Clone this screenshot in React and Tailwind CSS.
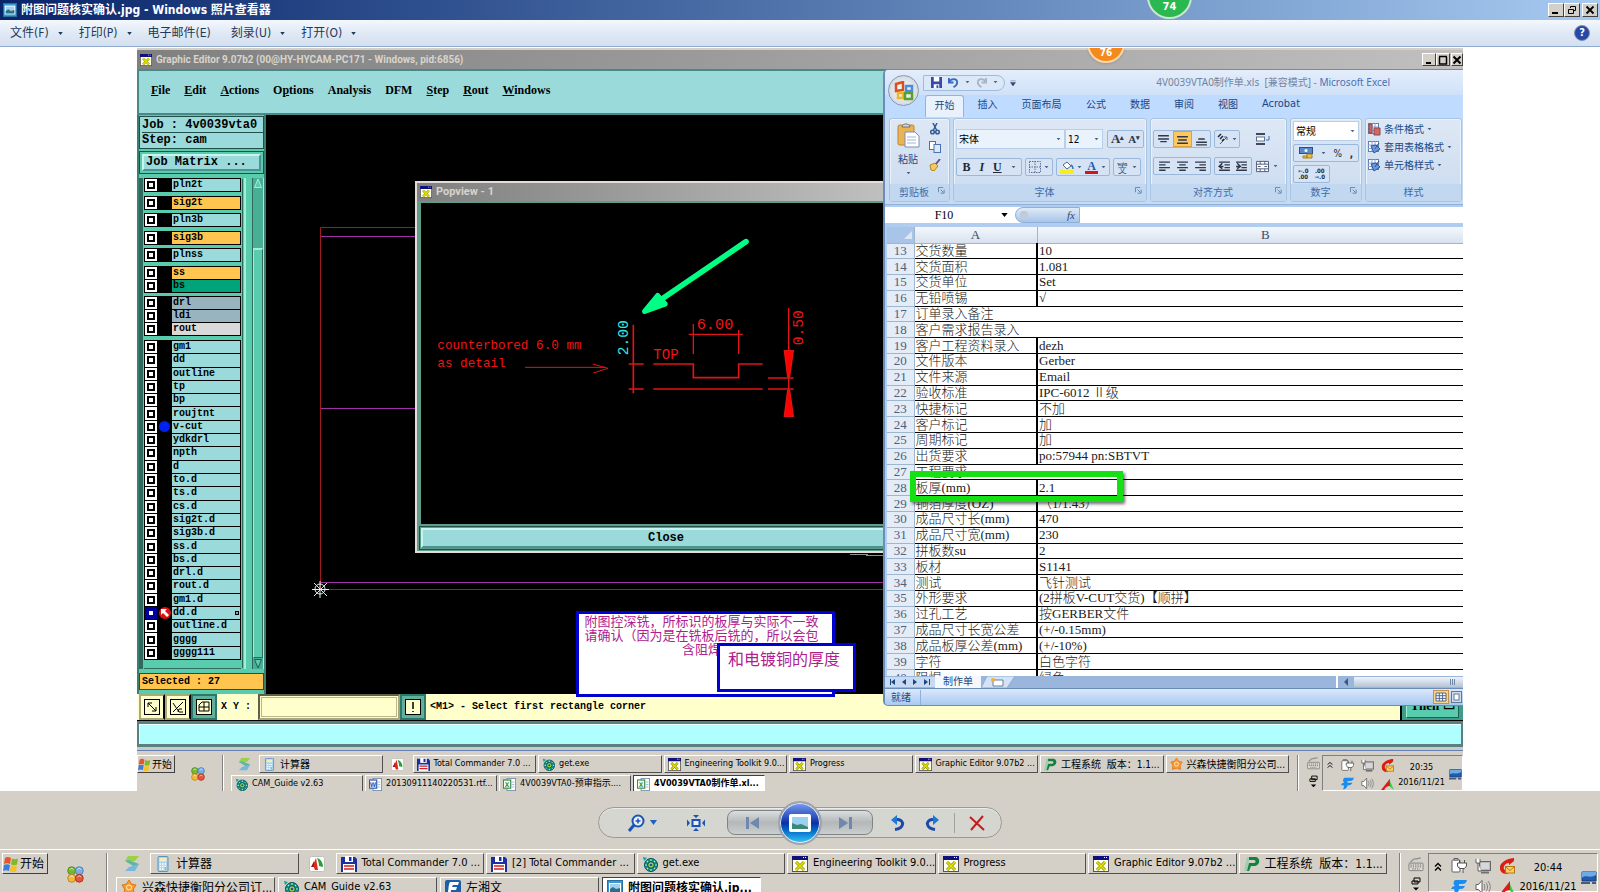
import { useState } from "react";

const layerGroups = [
  [{ name: "pln2t", color: "bg-[#9adada]" }],
  [{ name: "sig2t", color: "bg-[#ffc54f]" }],
  [{ name: "pln3b", color: "bg-[#9adada]" }],
  [{ name: "sig3b", color: "bg-[#ffc54f]" }],
  [{ name: "plnss", color: "bg-[#9adada]" }],
  [
    { name: "ss", color: "bg-[#ffc54f]" },
    { name: "bs", color: "bg-[#00a37a]" },
  ],
  [
    { name: "drl", color: "bg-[#98b4bf]" },
    { name: "ldi", color: "bg-[#98b4bf]" },
    { name: "rout", color: "bg-[#d9d9d9]" },
  ],
  [
    "gm1", "dd", "outline", "tp", "bp", "roujtnt", "v-cut", "ydkdrl", "npth", "d", "to.d", "ts.d",
    "cs.d", "sig2t.d", "sig3b.d", "ss.d", "bs.d", "drl.d", "rout.d", "gm1.d", "dd.d", "outline.d",
    "gggg", "gggg111",
  ].map((name) => ({ name, color: "bg-[#9adada]" })),
];

const sheetRows = [
  [13, "交货数量", "10"],
  [14, "交货面积", "1.081"],
  [15, "交货单位", "Set"],
  [16, "无铅喷锡", "√"],
  [17, "订单录入备注", null],
  [18, "客户需求报告录入", null],
  [19, "客户工程资料录入", "dezh"],
  [20, "文件版本", "Gerber"],
  [21, "文件来源", "Email"],
  [22, "验收标准", "IPC-6012 Ⅱ级"],
  [23, "快捷标记", "不加"],
  [24, "客户标记", "加"],
  [25, "周期标记", "加"],
  [26, "出货要求", "po:57944 pn:SBTVT"],
  [27, "工程要求", null],
  [28, "板厚(mm)", "2.1"],
  [29, "铜箔厚度(OZ)", "（1/1.43）"],
  [30, "成品尺寸长(mm)", "470"],
  [31, "成品尺寸宽(mm)", "230"],
  [32, "拼板数su", "2"],
  [33, "板材", "S1141"],
  [34, "测试", "飞针测试"],
  [35, "外形要求", "(2拼板V-CUT交货)【顺拼】"],
  [36, "过孔工艺", "按GERBER文件"],
  [37, "成品尺寸长宽公差", "(+/-0.15mm)"],
  [38, "成品板厚公差(mm)", "(+/-10%)"],
  [39, "字符", "白色字符"],
  [40, "阻焊", "绿色"],
];

/* ---------- icons ---------- */

const XWindowIcon = ({ className }) => (
  <svg viewBox="0 0 16 16" className={className}>
    <rect x="0.500" y="1.500" width="15" height="14" fill="#fffff0" stroke="#555" />
    <rect x="0" y="0" width="16" height="4" fill="#10107a" />
    <path d="M11 1.500h1M13 1.500h1" stroke="#fff" />
    <path d="M4 6l8 8M12 6l-8 8" stroke="#8a8a00" strokeWidth="3" />
    <path d="M4 6l8 8M12 6l-8 8" stroke="#e6e600" strokeWidth="1.600" />
  </svg>
);

const DiskIcon = ({ className }) => (
  <svg viewBox="0 0 16 16" className={className}>
    <path d="M0 1h14l2 2v13H0z" fill="#1b2fa0" />
    <rect x="4" y="0" width="8" height="6" fill="#fff" />
    <rect x="8" y="1" width="2.500" height="4" fill="#1b2fa0" />
    <rect x="2" y="8" width="12" height="8" fill="#fff" />
    <path d="M3 10h10M3 13h10" stroke="#d02020" strokeWidth="1.400" />
  </svg>
);

const GetIcon = ({ className }) => (
  <svg viewBox="0 0 16 16" className={className}>
    <path d="M1 1l4 1-3 3z" fill="#10a0a0" />
    <circle cx="9" cy="9" r="6.500" fill="#0c8f86" stroke="#064f55" />
    <path d="M9 3v2M9 13v2M3 9h2M13 9h2M5 5l1 1M13 5l-1 1M5 13l1-1M13 13l-1-1" stroke="#aef0c0" strokeWidth="1.200" />
    <circle cx="9" cy="9" r="3.300" fill="#8fd84a" stroke="#103f60" />
    <circle cx="9" cy="9" r="1.300" fill="#1b50a0" />
  </svg>
);

const CalcIcon = ({ className }) => (
  <svg viewBox="0 0 16 16" className={className}>
    <rect x="3" y="0.500" width="10" height="15" rx="1" fill="#a8d4f0" stroke="#5c93bb" />
    <rect x="4.500" y="2" width="7" height="3.500" fill="#f7e9c0" />
    <path d="M4.500 8h7M4.500 10.500h7M4.500 13h7" stroke="#fff" strokeWidth="1.500" strokeDasharray="1.500 1" />
    <path d="M10.500 11v3" stroke="#f0a030" strokeWidth="1.500" />
  </svg>
);

const PdfIcon = ({ className }) => (
  <svg viewBox="0 0 16 16" className={className}>
    <rect x="0.500" y="0.500" width="15" height="15" rx="2" fill="#fff" stroke="#c0c0c0" />
    <path d="M8 2c4 1 6 5 6 9l-4-1c0-3-1-6-2-8z" fill="#2c9c38" />
    <path d="M7 2l2 12H6L4 9z" fill="#e02818" />
    <path d="M5 5L2 11h3z" fill="#a81212" />
  </svg>
);

const FoldIcon = ({ className }) => (
  <svg viewBox="0 0 16 16" className={className}>
    <path d="M4 0h11l-4 5H1z" fill="#9ccf4a" />
    <path d="M1 5l4-1 10 4-4 3z" fill="#5fb6a0" />
    <path d="M5 11l10-3-4 7H1z" fill="#78b8dc" />
  </svg>
);

const FlagIcon = ({ className }) => (
  <svg viewBox="0 0 16 16" className={className}>
    <path d="M2 2c2-1.500 4-1 6 0L7 8C5 7 3 7 1 8z" fill="#e8552a" />
    <path d="M9 2.500c2 1 4 1 6 0l-1 6c-2 1-4 1-6 0z" fill="#7db928" />
    <path d="M1 9c2-1 4-1 6 0l-1 6c-2-1-4-1-6 0z" fill="#3a7edc" />
    <path d="M8 9.500c2 1 4 1 6 0l-1 6c-2 1-4 1-6 0z" fill="#f8c020" />
  </svg>
);

const OrbsIcon = ({ className }) => (
  <svg viewBox="0 0 18 18" className={className}>
    <circle cx="5" cy="5" r="4.200" fill="#78b830" stroke="#4c8a20" />
    <circle cx="13" cy="5" r="4.200" fill="#78b0e4" stroke="#4a7cc0" />
    <circle cx="5" cy="13" r="4.200" fill="#f0b83c" stroke="#c08420" />
    <circle cx="13" cy="13" r="4.200" fill="#e05838" stroke="#b03020" />
    <path d="M3 4c1-2 3-2 4 0M11 4c1-2 3-2 4 0M3 12c1-2 3-2 4 0M11 12c1-2 3-2 4 0" stroke="#ffffffaa" fill="none" />
  </svg>
);

const PIcon = ({ className }) => (
  <svg viewBox="0 0 16 16" className={className}>
    <path d="M3 1h3L3 15H0z" fill="#9ccfae" />
    <path d="M5 1h7c5 1 4 9-2 9H7l-2 5H3l2-8h5c2 0 2-3 0-3H5z" fill="#14823f" />
  </svg>
);

const StarIcon = ({ className }) => (
  <svg viewBox="0 0 16 16" className={className}>
    <path
      d="M8 0l2.500 4L15 5l-2.500 4 .5 5-5-1.500L3 14l.5-5L1 5l4.500-1z"
      fill="#f79a30"
      stroke="#e07818"
    />
    <circle cx="8" cy="7.500" r="2.500" fill="none" stroke="#fff3d0" />
  </svg>
);

const DocIcon = ({ className, letter, color }) => (
  <svg viewBox="0 0 16 16" className={className}>
    <rect x="5" y="0.500" width="10.500" height="15" fill="#fff" stroke="#6f86a8" />
    <path d="M11 5h3M11 8h3M11 11h3" stroke="#9ab0cc" />
    <rect x="0.500" y="2.500" width="9" height="10" fill="#fff" stroke={color} strokeWidth="1.500" />
    <text x="5" y="10.500" fontSize="8" fontWeight="bold" textAnchor="middle" fill={color}>{letter}</text>
  </svg>
);

const PictureIcon = ({ className }) => (
  <svg viewBox="0 0 16 16" className={className}>
    <rect x="0.500" y="0.500" width="15" height="15" fill="#3a9ad0" stroke="#2a70a0" />
    <rect x="2" y="3" width="12" height="10" fill="#fff" />
    <rect x="3" y="4" width="10" height="8" fill="#9fd2f0" />
    <path d="M3 12V9l3-2 3 2 4-1v4z" fill="#2c6f86" />
  </svg>
);

const BlueFIcon = ({ className }) => (
  <svg viewBox="0 0 16 16" className={className}>
    <rect width="16" height="16" rx="2" fill="#1c5fa8" />
    <path d="M5 2h9l-1 3H8L7 7h5l-1 3H6c0 3-1 4-4 5 2-4 1-10 3-13z" fill="#fff" />
  </svg>
);

const SwooshIcon = ({ className }) => (
  <svg viewBox="0 0 16 16" className={className}>
    <path d="M4 1h12c-1 3-2 4-5 4H8v2h6c-1 2-2 3-4 3H8c0 3-3 5-6 5 2-2 2-3 1-5H0c1-2 2-3 4-3-2-2-2-4 0-6z" fill="#1a8cf0" />
  </svg>
);

const PlugIcon = ({ className }) => (
  <svg viewBox="0 0 16 16" className={className}>
    <rect x="1" y="2" width="8" height="12" rx="1" fill="#fff" stroke="#606060" />
    <path d="M3 0.500h4V2H3z" fill="#fff" stroke="#606060" />
    <path d="M8.500 2v3M13.500 2v3M6.500 5h9v3l-2 2.500h-1.500V15M8.500 10.500L6.500 8V5M8.500 10.500H12" stroke="#505050" fill="#fff" />
  </svg>
);

const NetworkIcon = ({ className }) => (
  <svg viewBox="0 0 16 16" className={className}>
    <rect x="4.500" y="3.500" width="11" height="9" fill="#b8b8b8" stroke="#686868" />
    <rect x="6" y="5" width="8" height="6" fill="#d8d8d8" />
    <path d="M6 14.500h8" stroke="#707070" strokeWidth="2" />
    <path d="M1 1v4h4V1M3 5v8h3" stroke="#606060" fill="#fff" />
  </svg>
);

const MailIcon = ({ className }) => (
  <svg viewBox="0 0 16 16" className={className}>
    <path d="M15 0C10 0 0 4 1 10c0 5 4 6 8 6l-1-3C2 12 5 5 10 5v2l5-4z" fill="#dd1c14" />
    <rect x="6.500" y="8.500" width="9" height="6.500" fill="#ffd060" stroke="#b87818" />
    <path d="M6.500 8.500l4.500 4 4.500-4" fill="none" stroke="#b87818" />
  </svg>
);

const SpeakerIcon = ({ className }) => (
  <svg viewBox="0 0 16 16" className={className}>
    <path d="M1 5.500h2.500L7 1.500v13l-3.500-4H1z" fill="#fff" stroke="#606060" />
    <path d="M9 5c1 2 1 4 0 6M11 3.500c2 3 2 6 0 9M13 2c3 4 3 8 0 12" fill="none" stroke="#808080" />
  </svg>
);

const TriIcon = ({ className }) => (
  <svg viewBox="0 0 16 16" className={className}>
    <path d="M0 16L11 2v9c-4 0-6 2-7 5z" fill="#e01818" />
    <path d="M11 5l5 11-5-4z" fill="#30d040" />
  </svg>
);

const KeyboardIcon = ({ className }) => (
  <svg viewBox="0 0 16 16" className={className}>
    <path d="M2 5c3 0 1-3 5-3s3-1 6-1" fill="none" stroke="#909090" strokeWidth="1.500" />
    <rect x="0.500" y="6.500" width="15" height="8" rx="1" fill="#dedad2" stroke="#808080" />
    <path d="M2 8.500h12M2 10.500h12M4 12.700h8" stroke="#707070" strokeDasharray="1.500 1" />
  </svg>
);

const DesktopIcon = ({ className }) => (
  <svg viewBox="0 0 16 16" className={className}>
    <path d="M1 2h14v9H1z" fill="#1f5cae" stroke="#1a3a70" />
    <path d="M1 2h14v3C9 9 5 4 1 8z" fill="#6ea9e8" />
    <path d="M0 13h9M11 13h4" stroke="#4a5a78" strokeWidth="2" />
  </svg>
);

const WindowButton = ({ label, children, className }) => (
  <button
    aria-label={label}
    className={`flex items-center justify-center border border-t-white border-l-white border-r-[#404040] border-b-[#404040] bg-[#d4d0c8] ${className}`}
  >
    <svg viewBox="0 0 10 10" className="size-[10px]">
      {children}
    </svg>
  </button>
);

/* ---------- taskbar ---------- */

const pickIcon = {
  x: XWindowIcon,
  disk: DiskIcon,
  get: GetIcon,
  calc: CalcIcon,
  p: PIcon,
  star: StarIcon,
  pic: PictureIcon,
  f: BlueFIcon,
  word: (p) => <DocIcon {...p} letter="W" color="#2b5fb4" />,
  excel: (p) => <DocIcon {...p} letter="X" color="#3c9040" />,
};

function TaskButton({ icon, text, active, small, className }) {
  const Icon = pickIcon[icon];
  // latin titles run wider than the chinese ones, so they get one size less
  const chinese = /^[\u4e00-\u9fff]/.test(text);
  const size = small ? (chinese ? "text-[10px]" : "text-[9px]") : chinese ? "text-[12px]" : "text-[11px]";
  return (
    <button
      className={`flex min-w-0 items-center border text-left whitespace-pre ${size} ${
        active
          ? "border-t-[#404040] border-l-[#404040] border-r-white border-b-white bg-white font-bold"
          : "border-t-white border-l-white border-r-[#505050] border-b-[#505050] bg-[#d4d0c8]"
      } ${small ? "h-[18px] gap-1 pl-[3px]" : "h-[21px] gap-[5px] pl-1"} ${className}`}
    >
      <Icon className={small ? "size-[13px] shrink-0" : "size-4 shrink-0"} />
      {text}
    </button>
  );
}

function Taskbar({ small, first, firstRow, secondRow, time }) {
  const ic = small ? "size-[13px]" : "size-4";
  return (
    <div
      className={`flex shrink-0 overflow-hidden bg-[#d4d0c8] text-black ${
        small ? "h-10 pt-[4px] text-[10px]" : "h-[43px] border-t border-white pt-[3px] pl-[2px] text-[12px]"
      }`}
    >
      <button
        className={`flex shrink-0 items-center gap-px border border-t-white border-l-white border-r-[#404040] border-b-[#404040] whitespace-nowrap ${
          small ? "h-[18px] w-[38px]" : "h-[21px] w-[46px]"
        }`}
      >
        <FlagIcon className={small ? "size-[13px] shrink-0" : "size-4 shrink-0"} />
        开始
      </button>
      <OrbsIcon className={small ? "mt-3 ml-4 size-[14px] shrink-0" : "mt-[13px] ml-[19px] size-[17px] shrink-0"} />
      <div className={`w-[2px] shrink-0 border-l border-[#808080] bg-white ${small ? "ml-[17px]" : "ml-[22px]"}`} />
      <div className={`flex min-w-0 flex-1 flex-col ${small ? "gap-[2px] pl-[7px]" : "gap-[3px] pl-2"}`}>
        <div className="flex gap-[2px]">
          <div className={`flex shrink-0 items-center ${small ? "w-[26px] pl-[7px]" : "w-8 pl-2"}`}>
            <FoldIcon className={ic} />
          </div>
          <TaskButton {...first} small={small} className="flex-1" />
          <div className={`flex shrink-0 items-center justify-center ${small ? "w-[26px]" : "w-[33px]"}`}>
            <PdfIcon className={ic} />
          </div>
          {firstRow.map((t) => (
            <TaskButton key={t.text} {...t} small={small} className="flex-1" />
          ))}
        </div>
        <div className={small ? "flex gap-[2px]" : "flex gap-[3px]"}>
          {secondRow.map((t) => (
            <TaskButton key={t.text} {...t} small={small} className={small ? "w-[132px]" : "w-[159px]"} />
          ))}
        </div>
      </div>
      <div className={`w-[2px] shrink-0 border-l border-[#808080] bg-white ${small ? "ml-2" : "ml-3"}`} />
      <div className={`flex shrink-0 flex-col items-center gap-[3px] ${small ? "ml-[6px] w-4 pt-[2px]" : "ml-[7px] w-4 pt-1"}`}>
        <KeyboardIcon className={ic} />
        <svg viewBox="0 0 10 14" className={small ? "h-4 w-[9px]" : "h-[18px] w-[10px]"}>
          <path d="M3 1.500h6v4H3zM1 4.500h6v3H1z" fill="#d4d0c8" stroke="#000" />
          <path d="M2 11h6l-3 3z" />
        </svg>
      </div>
      <div className={`flex shrink-0 border border-t-[#808080] border-l-[#808080] border-r-white border-b-white ${small ? "ml-px w-[141px] pl-1" : "mr-[2px] ml-1 w-[170px] pl-[5px]"}`}>
        <svg viewBox="0 0 8 10" className={small ? "mt-[5px] h-2 w-[6px]" : "mt-[8px] h-[10px] w-2"}>
          <path d="M1 4.500l3-3 3 3M1 8.500l3-3 3 3" fill="none" stroke="#000" strokeWidth="1.300" />
        </svg>
        <div className={`grid shrink-0 grid-cols-3 content-start ${small ? "ml-2 gap-x-[7px] gap-y-[5px] pt-[3px]" : "ml-[9px] gap-x-2 gap-y-[5px] pt-1"}`}>
          <PlugIcon className={ic} />
          <NetworkIcon className={ic} />
          <MailIcon className={ic} />
          <SwooshIcon className={ic} />
          <SpeakerIcon className={ic} />
          <TriIcon className={ic} />
        </div>
        <div className={`flex flex-1 flex-col items-center whitespace-nowrap ${small ? "pt-1 text-[9px] leading-[15px]" : "pt-1 text-[11px] leading-[19px]"}`}>
          <span>{time}</span>
          <span>2016/11/21</span>
        </div>
        <DesktopIcon className={small ? "mt-3 size-[13px] shrink-0" : "mt-4 size-4 shrink-0"} />
      </div>
    </div>
  );
}

/* ---------- graphic editor ---------- */

function LayerPanel() {
  const [checked, setChecked] = useState({ "dd.d": true });

  return (
    <aside className="flex w-[129px] shrink-0 flex-col border-x-2 border-[#3a8070] bg-[#5accae] font-['Liberation_Mono',monospace] font-bold">
      <div className="mt-px border border-[#205048] bg-[#9adada] pl-[2px] text-[12px]">
        <div className="h-4 border-b border-[#205048] leading-4">Job : 4v0039vta0</div>
        <div className="h-[15px] leading-[15px]">Step: cam</div>
      </div>
      <div className="mt-[2px] border border-[#205048] bg-[#5accae] p-[2px]">
        <button className="block h-[17px] w-full border-2 border-t-[#c8f4f0] border-l-[#c8f4f0] border-r-[#4a9490] border-b-[#4a9490] bg-[#9adada] pl-[2px] text-left text-[12px] leading-[13px]">
          Job Matrix ...
        </button>
      </div>
      <div className="mt-[4px] flex min-h-0 flex-1">
        <div className="flex flex-1 flex-col border-l-4 border-[#2f6a5c] pr-px pl-px">
          <div className="flex min-h-0 flex-1 flex-col justify-between text-[10px]">
            {layerGroups.map((group, i) => (
              <div key={i} className={`flex flex-col gap-px bg-black p-px ${group.length > 3 ? "h-[320px]" : ""}`}>
                {group.map(({ name, color }) => (
                  <label key={name} className="flex min-h-0 flex-1 leading-[12px]">
                    <span className={`flex w-3 items-center justify-center ${checked[name] ? "bg-[#0000a0]" : "bg-white"}`}>
                      <input
                        type="checkbox"
                        checked={!!checked[name]}
                        onChange={() => setChecked((c) => ({ ...c, [name]: !c[name] }))}
                        className="size-2 appearance-none border-2 border-black bg-white checked:border-[#0000a0]"
                      />
                    </span>
                    <span className="flex w-[15px] items-center justify-center">
                      {name === "v-cut" && <span className="size-[11px] rounded-full bg-[#0020f0]" />}
                      {name === "dd.d" && (
                        <svg viewBox="0 0 12 12" className="size-3">
                          <circle cx="6" cy="6" r="6" fill="#e01010" />
                          <path d="M2 2h6L6 4l4 4-2 2-4-4-2 2z" fill="#fff" />
                        </svg>
                      )}
                    </span>
                    <span className={`flex h-full flex-1 items-center justify-between pl-px ${color}`}>
                      {name}
                      {name === "dd.d" && <span className="mr-px size-1 border border-black bg-gray-400" />}
                    </span>
                  </label>
                ))}
              </div>
            ))}
          </div>
          <div className="h-[9px] border-b border-[#2f6a5c]" />
        </div>
        <div className="my-px w-[2px] border-l border-[#2f6a5c]" />
        <div className="w-1 border-l-2 border-[#a0f0d8]" />
        <div className="ml-[4px] flex w-[12px] flex-col border-x border-t-0 border-l-[#2f6a5c] border-r-[#a0f0d8] bg-[#48ae96]">
          <svg viewBox="0 0 9 11" className="h-[11px]">
            <path d="M1 9.500L4.500 1 8 9.500z" fill="#5accae" stroke="#a0f0d8" />
          </svg>
          <div className="h-[59px]" />
          <div className="flex-1 border border-t-2 border-[#a0f0d8] border-r-[#2f6a5c] border-b-[#2f6a5c] bg-[#5accae]" />
          <svg viewBox="0 0 9 11" className="h-[11px]">
            <path d="M1 1.500L4.500 10 8 1.500z" fill="#5accae" stroke="#206050" />
          </svg>
        </div>
      </div>
      <div className="mt-1 mb-1 h-[17px] border border-[#205048] bg-[#ffc54f] pl-[2px] text-[10px] leading-[15px]">
        Selected : 27
      </div>
    </aside>
  );
}

function Popview() {
  return (
    <section className="absolute top-[66px] left-[149px] flex h-[372px] w-[502px] flex-col border-2 border-[#e4dcd8] bg-[#5f9c8c]">
      <header className="flex h-[18px] shrink-0 items-center gap-1 bg-linear-to-r from-[#808080] to-[#c4c4c4] pl-[3px] font-['Roboto',sans-serif] text-[11px] font-bold text-[#d8d4cc]">
        <XWindowIcon className="size-3" />
        Popview - 1
      </header>
      <div className="mx-1 mt-[2px] h-[321px] bg-black">
        <svg viewBox="63 69 1476 963" className="h-[321px] w-[492px]">
          <g stroke="#00ff84" fill="#00ff84" strokeLinecap="round" strokeLinejoin="round">
            <path d="M1038 185L790 354" strokeWidth="17" />
            <path d="M734 394L773 347 795 372Z" strokeWidth="16" />
          </g>
          <g stroke="#e01414" fill="none" strokeWidth="4">
            <path d="M375 562H618M578 552L624 565 580 579" strokeWidth="3" />
            <path d="M700 434V640M686 552H731M686 627H731" strokeWidth="5" />
            <path d="M760 552H880V593H1016V552H1088M760 627H1088" strokeWidth="5" />
            <path d="M880 432V522M1016 450V522M866 463H1028" />
            <path d="M1166 384V640M1104 594H1181M1104 627H1181" />
            <path d="M1153 512H1180L1169 590H1163ZM1163 632H1169L1180 709H1153Z" fill="#ff0000" />
          </g>
          <g fill="#f01414" fontFamily="Liberation Mono, monospace">
            <text x="112" y="506" fontSize="38">counterbored 6.0 mm</text>
            <text x="112" y="560" fontSize="38">as detail</text>
            <text x="760" y="536" fontSize="42">TOP</text>
            <text x="890" y="446" fontSize="46">6.00</text>
            <text transform="translate(1210 496) rotate(-90)" fontSize="44">0.50</text>
            <text transform="translate(685 526) rotate(-90)" fontSize="44" fill="#30e8e8">2.00</text>
          </g>
        </svg>
      </div>
      <div className="mx-[2px] mt-[2px] border border-[#205048] bg-[#5f9c8c] p-px">
        <button className="block h-5 w-full border-2 border-t-[#c8f4f0] border-l-[#c8f4f0] border-r-[#4a9490] border-b-[#4a9490] bg-[#9adada] text-center font-['Liberation_Mono',monospace] text-[12px] leading-4 font-bold">
          Close
        </button>
      </div>
    </section>
  );
}

function EditorCanvas() {
  return (
    <div className="relative min-w-0 flex-1 bg-black">
      {/* board outline */}
      <svg viewBox="0 0 640 579" className="absolute top-0 left-0 h-[579px] w-[640px]">
        <path d="M54.500 475V112.500H640M54.500 474.500H640" fill="none" stroke="#a01c1c" />
        <path d="M55 121.500H640M55 293.500H640M55 467.500H640" stroke="#a030a8" />
        <path d="M584 439.500H602M600 440.500H640" stroke="#909090" />
        <g stroke="#d8f4f4" fill="none">
          <circle cx="54" cy="474" r="5" />
          <path d="M54 466v17M46 474.500h17M48 468l13 13M61 468l-13 13" />
        </g>
      </svg>
      <Popview />
      {/* review notes */}
      <div className="absolute top-[496px] left-[310px] h-[86px] w-[259px] border-[3px] border-[#0000d0] bg-white pt-px pr-2 text-center text-[13px] leading-[14px] whitespace-nowrap text-[#b0208c]">
        <p>附图控深铣，所标识的板厚与实际不一致</p>
        <p>请确认（因为是在铣板后铣的，所以会包</p>
        <p>含阻焊</p>
      </div>
      <div className="absolute top-[528px] left-[451px] h-[49px] w-[139px] border-[3px] border-[#0000d0] bg-white pl-2 text-[16px] leading-[28px] whitespace-nowrap text-[#b0208c]">
        和电镀铜的厚度
      </div>
    </div>
  );
}

const ToolButton = ({ label, dark, children }) => (
  <button
    aria-label={label}
    className={`flex w-[26px] shrink-0 items-center justify-center border-2 ${dark ? "border-[#2f7868] bg-[#5fb09c]" : "border-[#a8a878] border-r-black bg-[#ffffcc]"}`}
  >
    <svg viewBox="0 0 16 16" className="size-4 bg-[#ffffcc]" fill="none" stroke="#000">
      <rect x="0.500" y="0.500" width="15" height="15" />
      {children}
    </svg>
  </button>
);

function GraphicEditor() {
  return (
    <div className="flex min-h-0 flex-1 flex-col border-t-2 border-[#d4d0c8]">
      <header className="flex h-[19px] shrink-0 items-center gap-1 bg-linear-to-r from-[#808080] to-[#c0c0c0] pl-[3px] font-['Roboto',sans-serif] text-[10px] font-bold text-[#d8d4cc]">
        <XWindowIcon className="size-3" />
        <span className="flex-1">Graphic Editor 9.07b2 (00@HY-HYCAM-PC171 - Windows, pid:6856)</span>
        <div className="flex">
          <WindowButton label="Minimize" className="h-[13px] w-[14px]">
            <path d="M2 8h5" stroke="#000" strokeWidth="2" />
          </WindowButton>
          <WindowButton label="Maximize" className="mr-px h-[13px] w-[14px]">
            <path d="M1 1.500h8M1.500 2v7h7V2" fill="none" stroke="#000" strokeWidth="1.500" />
          </WindowButton>
          <WindowButton label="Close" className="h-[13px] w-3">
            <path d="M1.500 1.500l7 7M8.500 1.500l-7 7" stroke="#000" strokeWidth="2" />
          </WindowButton>
        </div>
      </header>
      <nav className="flex h-[46px] shrink-0 items-center gap-[14px] border-2 border-[#4a8888] bg-[#9adada] pb-1 pl-3 font-['Liberation_Serif',serif] text-[12px] font-bold">
        <button><u>F</u>ile</button>
        <button><u>E</u>dit</button>
        <button><u>A</u>ctions</button>
        <button>O<u>p</u>tions</button>
        <button>Analysis</button>
        <button>DFM</button>
        <button><u>S</u>tep</button>
        <button><u>R</u>out</button>
        <button><u>W</u>indows</button>
      </nav>
      <div className="flex min-h-0 flex-1">
        <LayerPanel />
        <EditorCanvas />
      </div>
      <div className="flex h-[27px] shrink-0 border-b border-black bg-[#ffffcc] pl-[2px] font-['Liberation_Mono',monospace] text-[10px] font-bold">
        <ToolButton label="Zoom area">
          <path d="M4 4l8 8M4 8V4h4M12 8v4H8" />
        </ToolButton>
        <ToolButton label="Measure">
          <path d="M3 13L13 3M3 4l6 9h4M8 13l1-3h3" />
        </ToolButton>
        <ToolButton label="Grid" dark>
          <path d="M3 12V6l3-3h7v9zM3 8h10M8 3v9" />
        </ToolButton>
        <label htmlFor="xy" className="w-[41px] shrink-0 pl-1 leading-[25px] whitespace-nowrap">
          X Y :
        </label>
        <input
          id="xy"
          className="w-[142px] border-2 border-[#a8a878] border-t-[#606048] border-l-[#606048] bg-[#ffffcc] px-1 outline outline-1 -outline-offset-4 outline-[#b8b890]"
        />
        <ToolButton label="Alert" dark>
          <path d="M8 3v7M8 12v1" strokeWidth="1.500" />
        </ToolButton>
        <span className="flex-1 pl-1 leading-[25px]">&lt;M1&gt; - Select first rectangle corner</span>
        <div className="w-[63px] border-l-2 border-black bg-[#3f9c88] px-1 pb-[2px]">
          <button className="h-full w-full border border-[#a0f0d8] border-r-[#206050] border-b-[#206050] bg-[#5accae] font-['Liberation_Serif',serif] text-[13px] leading-[22px]">
            Then ▭
          </button>
        </div>
      </div>
      <div className="h-[26px] shrink-0 border-x-2 border-y-[3px] border-[#5c8080] bg-[#b0ffff] shadow-[inset_1px_1px_0_#e8ffff]" />
      <div className="h-1 shrink-0 border-b border-[#6880b0] bg-[#c8ccc8]" />
    </div>
  );
}

/* ---------- excel ---------- */

const RibbonGroup = ({ title, launcher, className, children }) => (
  <div className={`flex shrink-0 flex-col rounded-[3px] border border-[#a8c4e4] bg-linear-to-b from-[#dee8f5] to-[#cadbf0] shadow-[inset_0_0_0_1px_#eaf2fb] ${className}`}>
    <div className="flex min-h-0 flex-1 flex-col px-[2px] pt-[2px]">{children}</div>
    <div className="flex h-[17px] items-center justify-center bg-[#c1d8f0] text-[10px] text-[#3e6aaa]">
      <span className="flex-1 text-center">{title}</span>
      {launcher && (
        <svg viewBox="0 0 8 8" className="mr-1 mb-1 size-[7px]">
          <path d="M0.500 6V0.500H6M3 3l3 3M7 3v4H3" fill="none" stroke="#5a7aa8" />
        </svg>
      )}
    </div>
  </div>
);

const Pill = ({ className = "", children }) => (
  <div className={`flex h-[18px] items-center justify-around rounded-[2px] border border-[#9ab8dc] bg-[#d5e3f4] px-px ${className}`}>
    {children}
  </div>
);

const Caret = () => (
  <svg viewBox="0 0 5 4" className="h-[3px] w-[5px] shrink-0">
    <path d="M0 0h5L2.500 3z" fill="#48648c" />
  </svg>
);

const Lines = ({ d }) => (
  <svg viewBox="0 0 12 12" className="size-[13px]">
    <path d={d} stroke="#303848" strokeWidth="1.300" fill="none" />
  </svg>
);

const fontSelect = "appearance-none border border-[#b8cfea] bg-[#eaf2fb] pl-[2px] text-[10px] text-black";

function Ribbon() {
  return (
    <div className="flex h-[88px] shrink-0 gap-[3px] overflow-hidden border-b border-[#8fb2dc] bg-[#c6daf2] pt-px pb-[2px] pl-1">
      <RibbonGroup title="剪贴板" launcher className="w-[61px]">
        <div className="flex gap-[9px] pl-1">
          <button className="flex w-[24px] flex-col items-center text-[10px] text-[#204a88]">
            <svg viewBox="0 0 24 26" className="mt-px h-[26px] w-6">
              <rect x="2" y="3" width="16" height="20" rx="1.500" fill="#eab455" stroke="#b88430" />
              <path d="M6 5c0-4 8-4 8 0z" fill="#d8d8d8" stroke="#707070" />
              <path d="M9 10h10l4 4v11H9z" fill="#fff" stroke="#7890b8" />
              <path d="M11 15h9M11 18h9M11 21h9" stroke="#a0b4d0" />
            </svg>
            <span className="mt-1 mb-[5px] whitespace-nowrap">粘贴</span>
            <Caret />
          </button>
          <div className="flex flex-col gap-[6px] pt-[2px]">
            <svg viewBox="0 0 12 12" className="size-3" fill="none" stroke="#345a98" strokeWidth="1.500">
              <path d="M4 0l3.500 7M8 0L4.500 7" />
              <circle cx="3.500" cy="9" r="1.800" />
              <circle cx="8.500" cy="9" r="1.800" />
            </svg>
            <svg viewBox="0 0 12 12" className="size-3">
              <rect x="0.500" y="0.500" width="6" height="8" fill="#fff" stroke="#4a72b0" />
              <rect x="5" y="3.500" width="6.500" height="8" fill="#dce8f8" stroke="#4a72b0" />
            </svg>
            <svg viewBox="0 0 12 12" className="size-3">
              <path d="M1 6l5-2 3 3-4 5-3-1z" fill="#f0cc60" stroke="#b08828" />
              <path d="M7 5l4-5" stroke="#705090" strokeWidth="2" />
            </svg>
          </div>
        </div>
      </RibbonGroup>

      <RibbonGroup title="字体" launcher className="w-[194px]">
        <div className="mt-2 flex items-center">
          <div className="relative flex w-[109px] items-center">
            <select aria-label="字体" className={`${fontSelect} h-5 w-full`}>
              <option>宋体</option>
            </select>
            <span className="pointer-events-none absolute right-1"><Caret /></span>
          </div>
          <div className="relative flex w-[38px] items-center">
            <select aria-label="字号" className={`${fontSelect} h-5 w-full`}>
              <option>12</option>
            </select>
            <span className="pointer-events-none absolute right-1"><Caret /></span>
          </div>
          <Pill className="ml-[4px] w-[37px] font-['Liberation_Serif',serif] font-bold text-[#303848]">
            <button className="text-[13px] leading-3">A<sup className="text-[7px]">▴</sup></button>
            <button className="text-[11px] leading-3">A<sup className="text-[7px]">▾</sup></button>
          </Pill>
        </div>
        <div className="mt-[9px] flex gap-[3px] font-['Liberation_Serif',serif] text-[12px] text-[#202838]">
          <Pill className="w-[66px]">
            <button className="font-bold">B</button>
            <button className="font-bold italic">I</button>
            <button className="font-bold underline">U</button>
            <Caret />
          </Pill>
          <Pill className="w-7">
            <svg viewBox="0 0 12 12" className="size-3">
              <path d="M0.500 0.500h11v11H0.500zM6 0v12M0 6h12" fill="none" stroke="#607090" strokeDasharray="1.500 1" />
            </svg>
            <Caret />
          </Pill>
          <Pill className="w-[54px]">
            <svg viewBox="0 0 14 14" className="size-[14px]">
              <path d="M3 5l4-3 4 4-4 3z" fill="#fff" stroke="#506890" />
              <path d="M11 5c2 1 2 3 2 4" stroke="#3a70c0" strokeWidth="1.500" fill="none" />
              <rect y="10" width="14" height="4" fill="#f4f020" />
            </svg>
            <Caret />
            <button className="border-b-[3px] border-[#d01818] px-[2px] leading-[10px] font-bold text-[#2858b0]">A</button>
            <Caret />
          </Pill>
          <Pill className="w-7">
            <span className="flex flex-col items-center text-[9px] leading-[6px] text-[#2c5490]">
              <span className="text-[6px] text-black">wén</span>文
            </span>
            <Caret />
          </Pill>
        </div>
      </RibbonGroup>

      <RibbonGroup title="对齐方式" launcher className="w-[137px]">
        <div className="mt-[9px] flex items-center">
          <Pill className="w-[58px]">
            <Lines d="M1 2.500h10M1 5.500h10M3 8h6" />
            <span className="flex h-full items-center border border-[#e0a040] bg-[#fdc860] px-[2px]">
              <Lines d="M1 3.500h10M2 6.500h8M1 9.500h10" />
            </span>
            <Lines d="M3 5.500h6M1 8.500h10M1 11h10" />
          </Pill>
          <Pill className="ml-[3px] w-[26px]">
            <svg viewBox="0 0 12 12" className="size-3">
              <path d="M3 11l7-7M7 4h3v3" stroke="#506080" fill="none" />
              <path d="M1 4l3-3M3 6l3-3M5 8l2-2" stroke="#202838" strokeWidth="1.500" />
            </svg>
            <Caret />
          </Pill>
          <svg viewBox="0 0 14 14" className="ml-4 size-[14px]">
            <path d="M0 2h9M0 12h9" stroke="#404858" strokeWidth="2" />
            <rect x="0.500" y="5" width="8" height="4" fill="#fff" stroke="#607090" />
            <path d="M13 4v4h-3" stroke="#3a70c0" fill="none" />
          </svg>
        </div>
        <div className="mt-[9px] flex items-center">
          <Pill className="w-[58px]">
            <Lines d="M1 2h10M1 4.500h6M1 7h10M1 9.500h6" />
            <Lines d="M1 2h10M3 4.500h6M1 7h10M3 9.500h6" />
            <Lines d="M1 2h10M5 4.500h6M1 7h10M5 9.500h6" />
          </Pill>
          <Pill className="ml-[3px] w-[38px]">
            <Lines d="M1 2h10M6 4.500h5M6 7h5M1 9.500h10M4 3L1 6l3 2M1 6h4" />
            <Lines d="M1 2h10M6 4.500h5M6 7h5M1 9.500h10M2 3l3 3-3 2M1 6h4" />
          </Pill>
          <svg viewBox="0 0 14 14" className="mr-1 ml-1 size-[13px]">
            <path d="M0.500 1.500h13v11H0.500zM4.500 1.500v3M9.500 1.500v3M4.500 9.500v3M9.500 9.500v3M0.500 4.500h13v5H0.500M2 7h3M12 7H9" fill="#fff" stroke="#485878" />
          </svg>
          <Caret />
        </div>
      </RibbonGroup>

      <RibbonGroup title="数字" launcher className="w-[72px]">
        <div className="relative flex items-center">
          <select aria-label="数字格式" className="h-5 w-full appearance-none border border-[#b8cfea] bg-white pl-[2px] text-[10px]">
            <option>常规</option>
          </select>
          <span className="pointer-events-none absolute right-1"><Caret /></span>
        </div>
        <Pill className="mt-[3px] text-[10px] text-[#202838]">
          <svg viewBox="0 0 14 12" className="h-3 w-[14px]">
            <rect x="0.500" y="0.500" width="13" height="6" fill="#5a88c8" stroke="#28508c" />
            <circle cx="7" cy="3.500" r="1.500" fill="#fff" />
            <path d="M8 7h5v4H8zM4 9h4v2H4z" fill="#f0c040" stroke="#a88020" />
          </svg>
          <Caret />
          <button>%</button>
          <button className="font-bold">,</button>
        </Pill>
        <Pill className="mt-[3px] w-[37px] text-[6px] leading-[6px] font-bold text-[#202838]">
          <button><span className="text-[#2860c0]">←</span>.0<br />.00</button>
          <button>.00<br /><span className="text-[#2860c0]">→</span>.0</button>
        </Pill>
      </RibbonGroup>

      <RibbonGroup title="样式" className="w-[97px]">
        <div className="flex flex-col gap-[2px] text-[10px] text-[#204a88]">
          {["条件格式", "套用表格格式", "单元格样式"].map((t, i) => (
            <button key={t} className="flex h-4 items-center gap-[3px] whitespace-nowrap">
              <svg viewBox="0 0 13 13" className="size-[13px]">
                <rect x="0.500" y="0.500" width="10" height="10" fill="#fff" stroke="#6080b0" />
                <path d="M0 4h10M0 7.500h10M4 0v10M7 0v10" stroke="#8aa4cc" />
                {i === 0 ? (
                  <path d="M1 1h3v9H1zM6 5h6v7H6z" fill="#d8685c" stroke="#804858" />
                ) : (
                  <path d="M3 5l5-1 4 4-6 4zM11 2L7 8" fill="#6c98dc" stroke="#2c58a0" />
                )}
              </svg>
              {t}
              <Caret />
            </button>
          ))}
        </div>
      </RibbonGroup>
      <div className="w-1 shrink-0 rounded-l-[3px] border border-[#a8c4e4] bg-[#dee8f5]" />
    </div>
  );
}

function ExcelWindow() {
  return (
    <section className="absolute top-[21px] right-0 bottom-[85px] left-[746px] flex flex-col overflow-hidden rounded-tl-[5px] rounded-bl-[5px] border-t border-l-2 border-b border-[#6b8cb8] bg-[#b0ccf0]">
      <header className="relative flex h-[25px] shrink-0 items-center bg-linear-to-b from-[#e4eefb] to-[#cfe1f8] pl-[38px] text-[11px]">
        <div className="flex h-4 w-[82px] items-center gap-[6px] rounded-r-full border border-[#a0bcdc] bg-[#dbe8f8] pl-[7px]">
          <svg viewBox="0 0 12 12" className="size-[11px]">
            <path d="M0 0h12v12H0z" fill="#3a48a8" />
            <path d="M3 0h6v5H3zM3 8h6v4H3z" fill="#fff" />
            <path d="M6 9h2v3H6z" fill="#3a48a8" />
          </svg>
          <svg viewBox="0 0 12 12" className="size-[11px]" fill="none" stroke="#3868c0" strokeWidth="2">
            <path d="M1 1v5h5M1 6c2-5 9-5 9 0 0 2-2 4-4 5" />
          </svg>
          <Caret />
          <svg viewBox="0 0 12 12" className="size-[11px]" fill="none" stroke="#a8b4c8" strokeWidth="2">
            <path d="M11 1v5H6M11 6C9 1 2 1 2 6c0 2 2 4 4 5" />
          </svg>
          <Caret />
        </div>
        <svg viewBox="0 0 6 7" className="ml-[5px] size-[6px]">
          <path d="M0 1h6M0 3h6L3 7z" fill="#304870" stroke="#304870" strokeWidth="0.500" />
        </svg>
        <div className="flex-1 pr-[73px] text-right font-['Noto_Sans','Noto_Sans_CJK_SC',sans-serif] text-[10px] whitespace-pre text-[#7484a0]">
          4V0039VTA0制作单.xls&nbsp; [兼容模式] - <span className="text-[#4a70b4]">Microsoft Excel</span>
        </div>
        {/* office button hangs over the tab row */}
        <button aria-label="Office" className="absolute top-[5px] left-[3px] flex size-[31px] items-center justify-center rounded-full border border-[#8a98b0] bg-radial from-white to-[#c4ccd8]">
          <svg viewBox="0 0 20 20" className="size-5" fill="none" strokeWidth="2.500">
            <path d="M2 3l7-2v8l-7 1z" stroke="#d8501c" />
            <path d="M12 5h6v5h-6z" stroke="#4a8ce0" />
            <path d="M4 12h5v5H4z" stroke="#e8b828" />
            <path d="M11 12h7v6h-7z" stroke="#58a030" />
          </svg>
        </button>
      </header>
      <nav className="flex h-[22px] shrink-0 items-end bg-[#bfdbff] pl-10 text-[10px] text-[#1e4680]">
        <button className="h-[22px] w-[39px] rounded-t-[3px] border border-b-0 border-[#90b4e0] bg-[#e8f1fc] pb-[3px]">开始</button>
        <button className="h-[22px] w-[47px] pb-[3px]">插入</button>
        <button className="h-[22px] w-[61px] pb-[3px]">页面布局</button>
        <button className="h-[22px] w-[48px] pb-[3px]">公式</button>
        <button className="h-[22px] w-[40px] pb-[3px]">数据</button>
        <button className="h-[22px] w-[48px] pb-[3px]">审阅</button>
        <button className="h-[22px] w-[40px] pb-[3px]">视图</button>
        <button className="h-[22px] w-[66px] pb-[3px] text-[11px]">Acrobat</button>
      </nav>
      <Ribbon />
      <div className="mt-[2px] flex h-4 shrink-0 bg-white pl-[2px]">
        <input aria-label="名称框" defaultValue="F10" className="w-[114px] text-center font-['Liberation_Serif',serif] text-[12px]" />
        <svg viewBox="0 0 8 5" className="mt-[6px] h-1 w-[7px]">
          <path d="M0 0h8L4 5z" />
        </svg>
        <div className="ml-[7px] flex w-[65px] items-center justify-between rounded-l-full border border-[#8fb0d8] bg-linear-to-b from-[#dfeaf7] to-[#a8c4e8] pr-1 pl-1 font-['Liberation_Serif',serif] text-[11px] text-[#304870] italic">
          <span className="size-2 rounded-full bg-[#c4d0e0] shadow-inner" />
          fx
        </div>
      </div>
      <div className="mt-1 ml-[2px] h-[449px] min-h-0 overflow-hidden bg-white">
        <table className="h-[459px] w-full table-fixed border-collapse font-['Liberation_Serif','Noto_Sans_CJK_SC',serif] text-[13px] leading-[14px] font-light text-[#202020]">
          <colgroup>
            <col className="w-[27px]" />
            <col className="w-[123px]" />
            <col />
          </colgroup>
          <thead>
            <tr className="h-4 bg-linear-to-b from-[#f4f8fc] to-[#d8e2ee] text-[#384c68]">
              <th className="border-r border-b border-[#9eb6ce] bg-[#a9c4e9]">
                <svg viewBox="0 0 8 8" className="mr-[2px] ml-auto size-2">
                  <path d="M8 0v8H0z" fill="#dbe8f8" />
                </svg>
              </th>
              <th className="border-r border-b border-[#9eb6ce] font-normal">A</th>
              <th className="border-b border-[#9eb6ce] pl-[30px] font-normal">B</th>
            </tr>
          </thead>
          <tbody>
            {sheetRows.map(([n, a, b]) => (
              <tr key={n}>
                <th className="border-r border-b border-[#9eb6ce] bg-[#e4ecf7] p-0 font-normal text-[#506078]">{n}</th>
                <td
                  colSpan={b === null ? 2 : 1}
                  className={`border-b border-black p-0 pl-px whitespace-nowrap ${b === null ? "" : "border-r-2"}`}
                >
                  {a}
                </td>
                {b !== null && <td className="border-b border-black p-0 pl-px whitespace-nowrap">{b}</td>}
              </tr>
            ))}
          </tbody>
        </table>
      </div>
      <div className="flex h-3 shrink-0 items-center bg-[#9ab6dc] text-[10px] text-[#1e4680]">
        <svg viewBox="0 0 50 10" className="h-[10px] w-[50px] bg-[#c6daf2]" fill="#1e4680">
          <path d="M5 2h1v6H5zM10 2v6L6 5zM21 2v6l-4-3zM28 2v6l4-3zM39 2v6l4-3zM44 2h1v6h-1z" />
        </svg>
        <button className="h-3 w-[46px] bg-[#f4f8fd] leading-3">制作单</button>
        <svg viewBox="0 0 36 12" className="h-3 w-9">
          <path d="M0 12L6 0h28l-8 12z" fill="#d4e2f4" stroke="#8cacd4" />
          <path d="M12 4h10v6H12z" fill="#fff" stroke="#6080b0" />
          <circle cx="12" cy="4" r="2" fill="#f4b030" />
        </svg>
        <div className="flex-1" />
        <div className="h-3 w-[2px] bg-white" />
        <svg viewBox="0 0 16 12" className="h-3 w-4">
          <path d="M10 2v8L6 6z" fill="#405880" />
        </svg>
        <div className="flex h-[10px] w-[109px] items-center justify-end gap-px bg-linear-to-b from-[#f0f4f9] to-[#b4c4d8] pr-2">
          <span className="h-[6px] w-px bg-[#7088a8]" />
          <span className="h-[6px] w-px bg-[#7088a8]" />
          <span className="h-[6px] w-px bg-[#7088a8]" />
        </div>
      </div>
      <footer className="flex min-h-0 flex-1 items-center border-t border-[#6b8cb8] bg-linear-to-b from-[#dce9fb] to-[#a9c8f2] text-[10px] text-[#304870]">
        <span className="w-9 border-r border-[#90b0dc] pl-[6px]">就绪</span>
        <span className="flex-1" />
        <svg viewBox="0 0 30 14" className="h-[14px] w-[30px]" fill="#fff">
          <rect x="0.500" y="0.500" width="15" height="13" fill="#fbd58a" stroke="#c89040" />
          <path d="M3 3h10v8H3zM3 5.700h10M3 8.400h10M6.300 3v8M9.600 3v8" stroke="#506890" />
          <rect x="18.500" y="1.500" width="10" height="11" fill="#d0dcec" stroke="#607898" />
          <rect x="21" y="4" width="5" height="6" stroke="#607898" />
        </svg>
      </footer>
      {/* highlight around the board thickness row */}
      <div className="pointer-events-none absolute top-[401px] left-[25px] h-[31px] w-[213px] border-[6px] border-[#14e014] shadow-[2px_2px_3px_#00000090]" />
    </section>
  );
}

/* ---------- photo viewer ---------- */

function ViewerControls() {
  return (
    <div className="flex h-[58px] shrink-0 items-start justify-center bg-[#d4d0c8] pt-4">
      <div className="relative flex h-[31px] w-[404px] items-center rounded-full border border-[#9a9a94] bg-[#d6d6d0] shadow-[inset_0_1px_0_#ececec]">
        <button aria-label="Zoom" className="ml-7 flex items-center gap-[5px]">
          <svg viewBox="0 0 18 18" className="size-[18px]" fill="none" stroke="#1c52b4">
            <circle cx="11" cy="7" r="5.500" strokeWidth="2" fill="#e8f0fc" />
            <path d="M7 11l-5 6" strokeWidth="3" />
            <path d="M8.500 7h5M11 4.500v5" strokeWidth="1.500" />
          </svg>
          <svg viewBox="0 0 7 5" className="h-[5px] w-[7px]">
            <path d="M0 0h7L3.500 5z" fill="#1c62c4" />
          </svg>
        </button>
        <button aria-label="Fit to window" className="ml-[30px]">
          <svg viewBox="0 0 18 18" className="size-[18px]" fill="#1c52b4">
            <rect x="5.500" y="6" width="7" height="6" fill="#e8f0fc" stroke="#1c52b4" strokeWidth="2" />
            <path d="M6 1h6L9 4zM6 17h6l-3-3zM0 5.500l3 3.500-3 3.500zM18 5.500L15 9l3 3.500z" />
          </svg>
        </button>
        <button aria-label="Previous" className="ml-[22px] flex h-[25px] w-[55px] items-center justify-center rounded-l-lg border border-[#7e8484] bg-linear-to-b from-[#dcdede] via-[#b4b8b8] to-[#cacece]">
          <svg viewBox="0 0 14 12" className="mr-1 h-3 w-[14px]" fill="#7088b0">
            <path d="M0 0h3v12H0zM13 0v12L4 6z" />
          </svg>
        </button>
        <button aria-label="Next" className="ml-9 flex h-[25px] w-[55px] items-center justify-center rounded-r-lg border border-[#7e8484] bg-linear-to-b from-[#dcdede] via-[#b4b8b8] to-[#cacece]">
          <svg viewBox="0 0 14 12" className="mr-[2px] h-3 w-[14px]" fill="#7088b0">
            <path d="M11 0h3v12h-3zM1 0v12l9-6z" />
          </svg>
        </button>
        <button aria-label="Rotate counterclockwise" className="ml-4">
          <svg viewBox="0 0 18 18" className="size-[18px]" fill="none">
            <path d="M6 5.500h3c7 1 6 9-3 10" stroke="#1c48a8" strokeWidth="3" />
            <path d="M8 1v10L2 6z" fill="#1c78d8" />
          </svg>
        </button>
        <button aria-label="Rotate clockwise" className="ml-4">
          <svg viewBox="0 0 18 18" className="size-[18px]" fill="none">
            <path d="M12 5.500H9c-7 1-6 9 3 10" stroke="#1c48a8" strokeWidth="3" />
            <path d="M10 1v10l6-5z" fill="#1c78d8" />
          </svg>
        </button>
        <div className="ml-[13px] h-5 w-px bg-[#a0a0a0]" />
        <button aria-label="Delete" className="ml-[14px]">
          <svg viewBox="0 0 16 16" className="size-4">
            <path d="M1 2l14 13M14 1L2 15" stroke="#c41c1c" strokeWidth="2" />
          </svg>
        </button>
        <button
          aria-label="Slide show"
          className="absolute -top-[7px] left-[179px] flex size-11 items-center justify-center rounded-full border-2 border-[#a0a4ac] bg-linear-to-b from-[#7c9cf0] via-[#0c2ea8] to-[#38c8f8] ring-1 ring-[#e8e8e8] ring-inset"
        >
          <svg viewBox="0 0 22 18" className="h-[18px] w-[22px]">
            <rect width="22" height="18" rx="2" fill="#fff" />
            <rect x="3" y="3" width="16" height="12" fill="#9cd0f0" />
            <path d="M3 15V9l5 2 4-1 7 3v2z" fill="#3a8878" />
          </svg>
        </button>
      </div>
    </div>
  );
}

const menuItems = [
  ["文件(F)", true],
  ["打印(P)", true],
  ["电子邮件(E)", false],
  ["刻录(U)", true],
  ["打开(O)", true],
];

export default function App() {
  return (
    <main className="flex h-screen flex-col overflow-hidden bg-white font-['DejaVu_Sans_Condensed','Noto_Sans','Noto_Sans_CJK_SC',sans-serif] text-black">
      <header className="relative flex h-5 shrink-0 items-center gap-[3px] bg-linear-to-r from-[#0a246a] to-[#a6caf0] px-[2px] text-white">
        <PictureIcon className="h-[14px] w-4" />
        <h1 className="flex-1 text-[12px] font-bold">附图问题核实确认.jpg - Windows 照片查看器</h1>
        <div className="flex">
          <WindowButton label="Minimize" className="h-[14px] w-4">
            <path d="M1 8h6" stroke="#000" strokeWidth="2" />
          </WindowButton>
          <WindowButton label="Restore" className="mr-[2px] h-[14px] w-4">
            <path d="M3.500 3V1.500h5v4H7M1.500 4.500h5v4h-5z" fill="none" stroke="#000" />
          </WindowButton>
          <WindowButton label="Close" className="h-[14px] w-4">
            <path d="M1.500 1.500l7 7M8.500 1.500l-7 7" stroke="#000" strokeWidth="1.800" />
          </WindowButton>
        </div>
        <span className="absolute -top-[26px] left-[1147px] z-10 flex size-[45px] items-end justify-center rounded-full border-2 border-[#c8e8d0] bg-[#2cb850] pb-1 text-[11px] leading-3 font-bold">
          74
        </span>
      </header>
      <nav className="flex h-[27px] shrink-0 items-center border-b border-[#8faacc] bg-linear-to-b from-[#f4f8fd] via-[#e0e9f5] to-[#d4e0f0] pl-[10px] text-[12px] text-[#1e395b]">
        {menuItems.map(([label, caret]) => (
          <button key={label} className={caret ? "mr-4 flex items-center gap-[9px]" : "mr-5"}>
            {label}
            {caret && (
              <svg viewBox="0 0 6 4" className="h-[3px] w-[5px]">
                <path d="M0 0h6L3 4z" fill="#1e395b" />
              </svg>
            )}
          </button>
        ))}
        <button aria-label="Help" className="mr-[10px] ml-auto flex size-4 items-center justify-center rounded-full border border-[#8090b0] bg-[#2848a8] text-[11px] font-bold text-white">
          ?
        </button>
      </nav>

      <div className="flex min-h-0 flex-1 bg-white px-[137px] pt-px">
        <div className="relative flex min-w-0 flex-1 flex-col overflow-hidden">
          <GraphicEditor />
          <ExcelWindow />
          <span className="absolute -top-[23px] left-[950px] flex size-[38px] items-end justify-center rounded-full border-2 border-[#ffd8a8] bg-[#f58a1c] pb-[2px] text-[10px] leading-3 font-bold text-white shadow">
            76
          </span>
          <Taskbar
            small
            time="20:35"
            first={{ icon: "calc", text: "计算器" }}
            firstRow={[
              { icon: "disk", text: "Total Commander 7.0 ..." },
              { icon: "get", text: "get.exe" },
              { icon: "x", text: "Engineering Toolkit 9.0..." },
              { icon: "x", text: "Progress" },
              { icon: "x", text: "Graphic Editor 9.07b2 ..." },
              { icon: "p", text: "工程系统  版本：1.1..." },
              { icon: "star", text: "兴森快捷衡阳分公司..." },
            ]}
            secondRow={[
              { icon: "get", text: "CAM_Guide v2.63" },
              { icon: "word", text: "20130911140220531.rtf..." },
              { icon: "excel", text: "4V0039VTA0-预审指示...." },
              { icon: "excel", text: "4V0039VTA0制作单.xl...", active: true },
            ]}
          />
        </div>
      </div>

      <ViewerControls />
      <Taskbar
        time="20:44"
        first={{ icon: "calc", text: "计算器" }}
        firstRow={[
          { icon: "disk", text: "Total Commander 7.0 ..." },
          { icon: "disk", text: "[2] Total Commander ..." },
          { icon: "get", text: "get.exe" },
          { icon: "x", text: "Engineering Toolkit 9.0..." },
          { icon: "x", text: "Progress" },
          { icon: "x", text: "Graphic Editor 9.07b2 ..." },
          { icon: "p", text: "工程系统  版本：1.1..." },
        ]}
        secondRow={[
          { icon: "star", text: "兴森快捷衡阳分公司订..." },
          { icon: "get", text: "CAM_Guide v2.63" },
          { icon: "f", text: "左湘文" },
          { icon: "pic", text: "附图问题核实确认.jp...", active: true },
        ]}
      />
    </main>
  );
}
